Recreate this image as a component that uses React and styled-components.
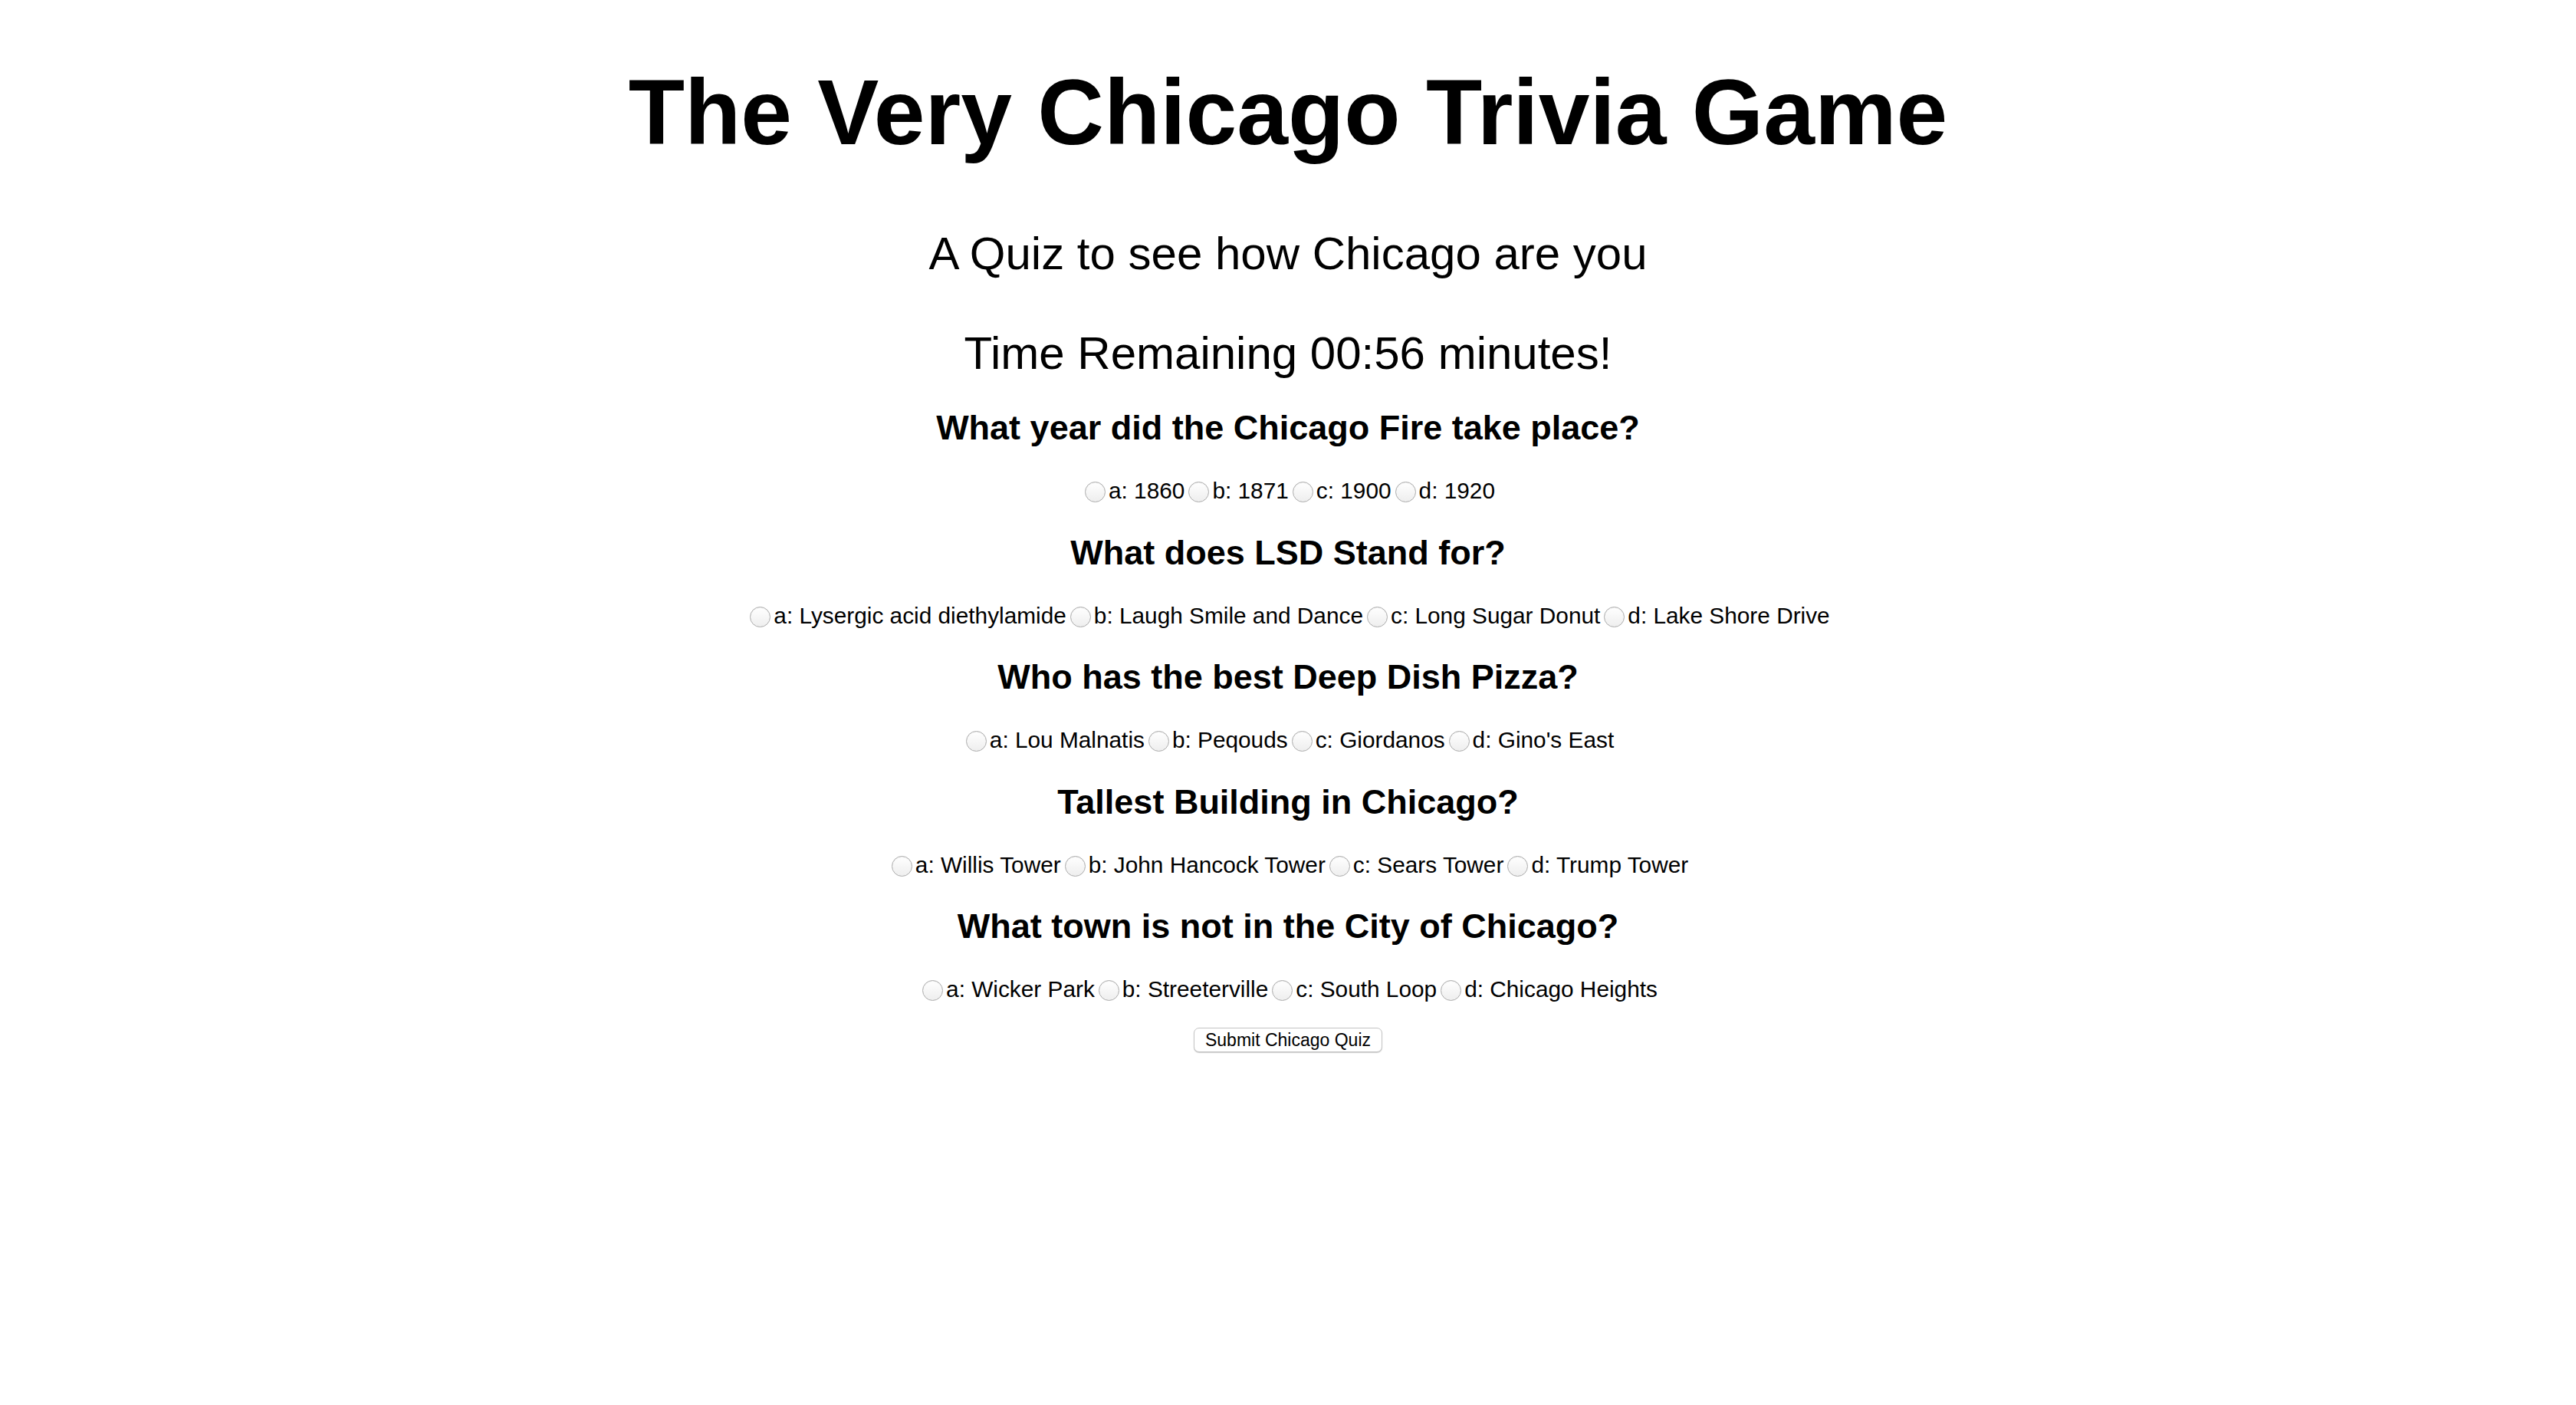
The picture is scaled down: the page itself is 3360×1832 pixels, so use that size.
import React, { useState } from 'react';
import styled, { createGlobalStyle } from 'styled-components';

const questions = [
  {
    id: 'q1',
    title: 'What year did the Chicago Fire take place?',
    answers: ['a: 1860', 'b: 1871', 'c: 1900', 'd: 1920'],
  },
  {
    id: 'q2',
    title: 'What does LSD Stand for?',
    answers: ['a: Lysergic acid diethylamide', 'b: Laugh Smile and Dance', 'c: Long Sugar Donut', 'd: Lake Shore Drive'],
  },
  {
    id: 'q3',
    title: 'Who has the best Deep Dish Pizza?',
    answers: ['a: Lou Malnatis', 'b: Peqouds', 'c: Giordanos', "d: Gino's East"],
  },
  {
    id: 'q4',
    title: 'Tallest Building in Chicago?',
    answers: ['a: Willis Tower', 'b: John Hancock Tower', 'c: Sears Tower', 'd: Trump Tower'],
  },
  {
    id: 'q5',
    title: 'What town is not in the City of Chicago?',
    answers: ['a: Wicker Park', 'b: Streeterville', 'c: South Loop', 'd: Chicago Heights'],
  },
];

const GlobalStyle = createGlobalStyle`
  body {
    margin: 0;
    background: #ffffff;
    color: #000000;
    font-family: "Liberation Sans", Arial, Helvetica, sans-serif;
  }
`;

const Page = styled.div`
  display: flex;
  flex-direction: column;
  align-items: center;
  text-align: center;
  min-height: 100vh;
`;

const Title = styled.h1`
  margin: 76px 0 0;
  font-size: 120px;
  line-height: 140px;
  font-weight: 700;
`;

const Lead = styled.p`
  margin: ${(p) => p.$top}px 0 0;
  font-size: 60px;
  line-height: 70px;
  font-weight: 400;
`;

const Form = styled.form`
  display: flex;
  flex-direction: column;
  align-items: center;
  margin-top: 36px;
`;

const Question = styled.h3`
  margin: ${(p) => (p.$first ? 0 : 37.5)}px 0 0;
  font-size: 45px;
  line-height: 52px;
  font-weight: 700;
`;

const Options = styled.div`
  margin-top: 39px;
  font-size: 29.8px;
  line-height: 34px;
  white-space: nowrap;
`;

const Option = styled.label`
  cursor: pointer;
`;

const Radio = styled.input`
  appearance: none;
  -webkit-appearance: none;
  width: 27px;
  height: 27px;
  margin: 0 4px 0 5px;
  border: 1px solid #ababab;
  border-radius: 50%;
  background: linear-gradient(#ffffff, #eeeeee);
  box-shadow: inset 0 1px 1px rgba(0, 0, 0, 0.06);
  vertical-align: -5px;
  cursor: pointer;

  &:checked {
    background: radial-gradient(circle, #ffffff 0 4px, #3b99fc 5px);
    border-color: #2f87e8;
  }
`;

const SubmitButton = styled.button`
  margin-top: 33px;
  padding: 2px 14px;
  font-family: "Liberation Sans", Arial, sans-serif;
  font-size: 23px;
  line-height: 26px;
  color: #000;
  background: #ffffff;
  border: 1px solid #c4c4c4;
  border-radius: 7px;
  box-shadow: 0 1px 1px rgba(0, 0, 0, 0.2);
  cursor: pointer;
`;

const App = () => {
  const [picked, setPicked] = useState({});

  const handlePick = (id, answer) => {
    setPicked({ ...picked, [id]: answer });
  };

  return (
    <>
      <GlobalStyle />
      <Page>
        <Title>The Very Chicago Trivia Game</Title>
        <Lead $top={80}>A Quiz to see how Chicago are you</Lead>
        <Lead $top={60}>Time Remaining 00:56 minutes!</Lead>
        <Form onSubmit={(e) => e.preventDefault()}>
          {questions.map((q, i) => (
            <React.Fragment key={q.id}>
              <Question $first={i === 0}>{q.title}</Question>
              <Options>
                {q.answers.map((answer) => (
                  <Option key={answer}>
                    <Radio
                      type="radio"
                      name={q.id}
                      checked={picked[q.id] === answer}
                      onChange={() => handlePick(q.id, answer)}
                    />
                    {answer}
                  </Option>
                ))}
              </Options>
            </React.Fragment>
          ))}
          <SubmitButton type="submit">Submit Chicago Quiz</SubmitButton>
        </Form>
      </Page>
    </>
  );
};

export default App;
